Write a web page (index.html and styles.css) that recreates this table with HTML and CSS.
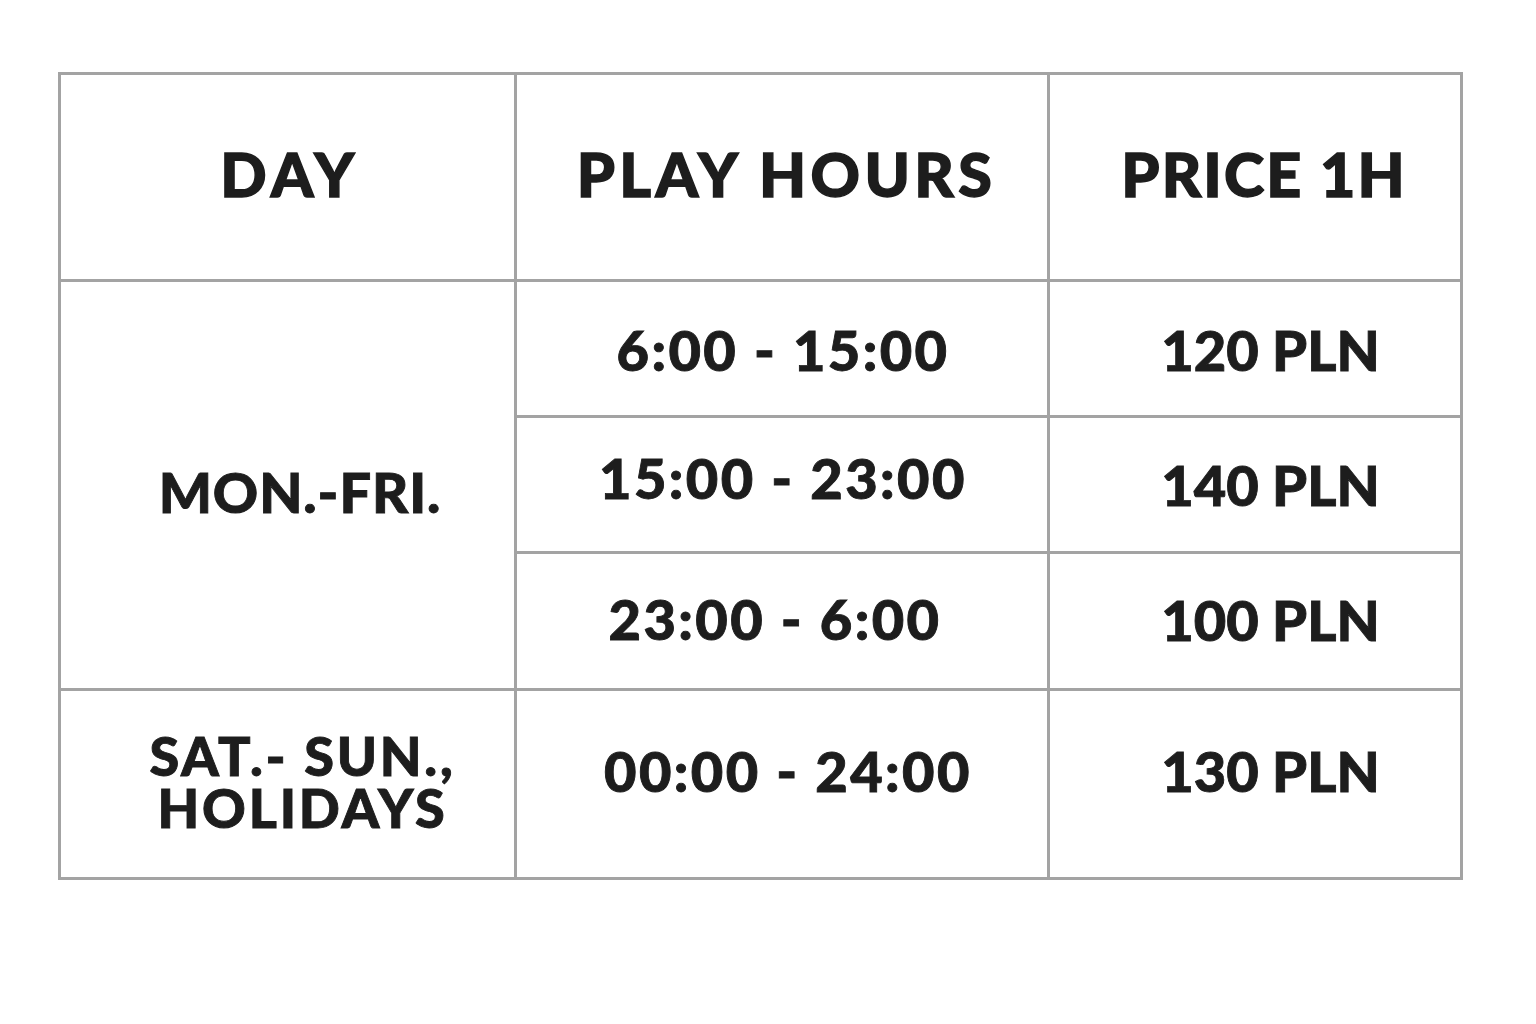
FILE: index.html
```html
<!DOCTYPE html>
<html lang="en">
<head>
<meta charset="utf-8">
<title>Play hours pricing</title>
<link rel="stylesheet" href="styles.css">
</head>
<body>
<div class="page">
  <div class="grid">
    <div class="cell head c-day">DAY</div>
    <div class="cell head c-hours">PLAY HOURS</div>
    <div class="cell head c-price">PRICE 1H</div>

    <div class="cell day mon">MON.-FRI.</div>
    <div class="cell hours h1">6:00 - 15:00</div>
    <div class="cell price p1">120 PLN</div>
    <div class="cell hours h2">15:00 - 23:00</div>
    <div class="cell price p2">140 PLN</div>
    <div class="cell hours h3">23:00 - 6:00</div>
    <div class="cell price p3">100 PLN</div>

    <div class="cell day sat"><span>SAT.- SUN.,</span><span>HOLIDAYS</span></div>
    <div class="cell hours h4">00:00 - 24:00</div>
    <div class="cell price p4">130 PLN</div>
  </div>
</div>
</body>
</html>
```
FILE: styles.css
```css
html, body {
  margin: 0;
  padding: 0;
  background: #ffffff;
}

.page {
  padding: 72px 0 0 58px;
  font-family: Lato, "DejaVu Sans", sans-serif;
  font-weight: 900;
  color: #1d1d1d;
  -webkit-text-stroke: 0.9px #1d1d1d;
}

.grid {
  display: grid;
  grid-template-columns: 453px 530px 410px;
  grid-template-rows: 204px 133px 133px 134px 186px;
  gap: 3px;
  padding: 3px;
  background: #a3a3a3;
  width: max-content;
}

.cell {
  background: #ffffff;
  display: flex;
  align-items: center;
  justify-content: center;
  line-height: 1;
  white-space: nowrap;
}

.head {
  font-size: 61px;
  padding-bottom: 7px;
  -webkit-text-stroke: 1.4px #1d1d1d;
}

.c-day { letter-spacing: 5.4px; padding-left: 5px; }
.c-hours { letter-spacing: 4.4px; padding-left: 9px; }
.c-price { letter-spacing: 2.1px; padding-left: 18px; }

.hours, .price, .day {
  font-size: 56px;
}

.hours { letter-spacing: 2.4px; }

.price {
  padding-left: 31px;
}

.mon {
  grid-row: 2 / 5;
  padding-left: 25px;
  padding-top: 14px;
  letter-spacing: 0.9px;
}

.sat {
  flex-direction: column;
  font-size: 54px;
  line-height: 52px;
  padding-left: 30px;
  padding-bottom: 5px;
  letter-spacing: 2.8px;
}

.h1 { padding-top: 3px; padding-left: 2px; }
.h2 { padding-bottom: 14px; padding-left: 2px; }
.h3 { padding-right: 14px; padding-bottom: 4px; }
.h4 { padding-left: 12px; padding-bottom: 26px; }

.p1 { padding-top: 3px; }
.p3 { padding-bottom: 2px; }
.p4 { padding-bottom: 26px; }
```
